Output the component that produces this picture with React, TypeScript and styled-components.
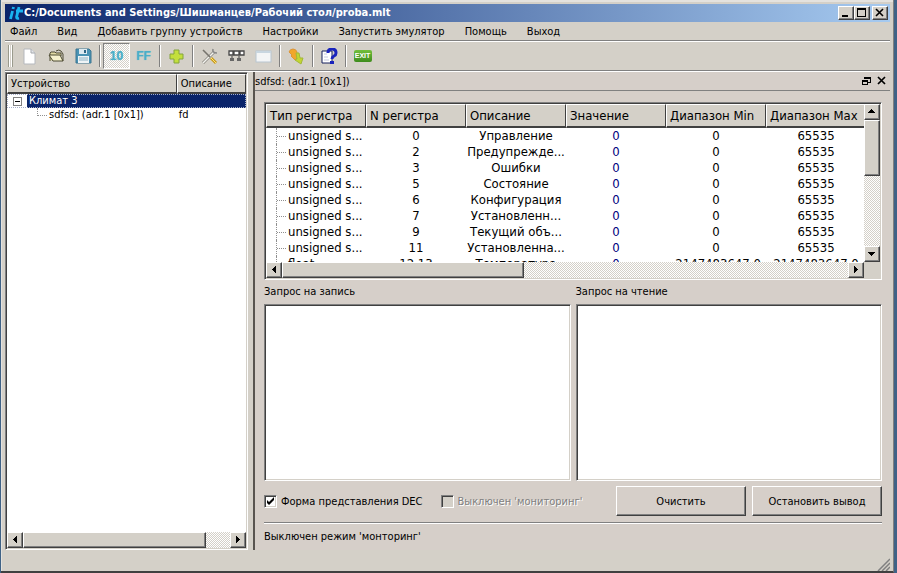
import React from "react";
import styled, { createGlobalStyle, css } from "styled-components";

const FACE = "#d4d0c8";
const PANEL = "#d6cfc9";
const DARK = "#404040";
const SHADOW = "#808080";

const Global = createGlobalStyle`
  *, *::before, *::after { box-sizing: border-box; }
  body { margin: 0; background: #3f6286; }
  body, button, input, textarea, table { font-family: "DejaVu Sans Condensed", "DejaVu Sans", sans-serif; font-size: 11px; color: #000; }
  button, textarea { border-radius: 0; }
`;

const raised = css`
  border: 1px solid;
  border-color: #fff ${DARK} ${DARK} #fff;
  box-shadow: inset -1px -1px 0 ${SHADOW};
`;
const sunken = css`
  border: 1px solid;
  border-color: ${SHADOW} #fff #fff ${SHADOW};
  box-shadow: inset 1px 1px 0 ${DARK}, inset -1px -1px 0 ${FACE};
`;
const dither = css`
  background: repeating-conic-gradient(#fff 0 25%, ${FACE} 0 50%) 0 0 / 2px 2px;
`;

const Window = styled.div`
  height: 100vh;
  margin: 0 3px 0 1px;
  padding: 4px 3px 0 4px;
  display: flex;
  flex-direction: column;
  background: ${FACE};
  border-bottom: 2px solid ${DARK};
  border-right: 1px solid ${SHADOW};
  box-shadow: inset 1px 2px 0 #e4e2de;
`;
const TitleBar = styled.header`
  height: 18px;
  flex: none;
  display: flex;
  align-items: center;
  padding: 0 2px 0 3px;
  background: linear-gradient(90deg, #0a246a, #a6caf0);
  color: #fff;
`;
const Title = styled.h1`
  margin: 0 auto 0 0;
  font-size: 11px;
  line-height: 18px;
  font-weight: bold;
  white-space: nowrap;
`;
const Caption = styled.button<{ $gap?: boolean }>`
  ${raised}
  width: 16px;
  height: 14px;
  padding: 0;
  display: flex;
  background: ${FACE};
  margin-left: ${(p) => (p.$gap ? 2 : 0)}px;
`;
const MenuBar = styled.nav`
  height: 19px;
  flex: none;
  display: flex;
  gap: 20px;
  padding-left: 5px;
  border-bottom: 1px solid ${SHADOW};
  a { color: #000; text-decoration: none; line-height: 20px; white-space: nowrap; }
`;
const ToolBar = styled.div`
  height: 30px;
  flex: none;
  display: flex;
  align-items: center;
  border-top: 1px solid #fff;
  border-bottom: 1px solid ${SHADOW};
  padding-left: 3px;
`;
const Grip = styled.span`
  width: 5px;
  height: 22px;
  margin-right: 3px;
  border: solid #9a9a8c;
  border-width: 0 1px;
  box-shadow: inset 1px 0 0 #fff, inset -1px 0 0 #fff;
`;
const Tool = styled.button<{ $on?: boolean }>`
  width: 27px;
  height: 26px;
  padding: 0;
  display: flex;
  align-items: center;
  justify-content: center;
  border: 1px solid transparent;
  background: none;
  ${(p) => p.$on && css`${dither} border-color: ${SHADOW} #fff #fff ${SHADOW};`}
`;
const Divider = styled.span`
  width: 2px;
  height: 22px;
  margin: 0 2px;
  background: linear-gradient(90deg, ${SHADOW} 50%, #fff 50%);
`;
const Main = styled.main`
  flex: 1;
  min-height: 0;
  display: flex;
  border-top: 1px solid #fff;
`;
const DevicePane = styled.section`
  ${sunken}
  width: 243px;
  flex: none;
  padding: 1px;
  background: #fff;
  display: flex;
  flex-direction: column;
`;
const Tree = styled.table`
  width: 100%;
  border-collapse: separate;
  border-spacing: 0;
  table-layout: fixed;
  th {
    height: 20px; padding: 0 3px; text-align: left; font-weight: normal; background: ${FACE};
    border: solid; border-width: 1px 1px 2px 1px; border-color: #fff ${DARK} ${DARK} #fff;
  }
  th:first-child { width: 71%; }
  td { height: 14px; line-height: 14px; padding: 0 2px; white-space: nowrap; }
`;
const Selected = styled.tr`
  background: #0a246a;
  color: #fff;
  outline: 1px dotted #a7b0cb;
  outline-offset: -1px;
`;
const Branch = styled.div<{ $leaf?: boolean }>`
  display: flex;
  align-items: center;
  height: 14px;
  padding-left: ${(p) => (p.$leaf ? 28 : 0)}px;
  &::before {
    content: "";
    display: ${(p) => (p.$leaf ? "block" : "none")};
    width: 10px;
    height: 8px;
    align-self: flex-start;
    margin-right: 2px;
    border: dotted #909090;
    border-width: 0 0 1px 1px;
  }
`;
const Expander = styled.button`
  width: 20px;
  height: 14px;
  margin-left: -2px;
  margin-right: 2px;
  padding: 0 0 0 6px;
  border: 0;
  background: #fff;
  display: flex;
  align-items: center;
`;
const Spacer = styled.div`
  flex: 1;
`;
const HScroll = styled.div`
  height: 16px;
  flex: none;
  display: flex;
  ${dither}
`;
const VScroll = styled.div`
  width: 16px;
  flex: none;
  display: flex;
  flex-direction: column;
  ${dither}
`;
const Arrow = styled.button`
  ${raised}
  width: 16px;
  height: 16px;
  flex: none;
  padding: 0;
  display: flex;
  background: ${FACE};
`;
const Thumb = styled.div<{ $grow: number }>`
  ${raised}
  background: ${FACE};
  flex: ${(p) => p.$grow} 0 0;
`;
const Track = styled.div<{ $grow: number }>`
  flex: ${(p) => p.$grow} 0 0;
`;
const Dock = styled.section`
  flex: 1;
  min-width: 0;
  margin-left: 5px;
  border-left: 2px solid #58544f;
  background: ${PANEL};
  display: flex;
  flex-direction: column;
`;
const DockTitle = styled.div`
  height: 19px;
  flex: none;
  display: flex;
  align-items: center;
  border-bottom: 1px solid ${SHADOW};
  h2 { margin: 0 auto 0 0; font-size: 11px; font-weight: normal; }
  button { width: 15px; height: 14px; padding: 0; border: 0; background: none; display: flex; }
`;
const Body = styled.div`
  flex: 1;
  min-height: 0;
  display: flex;
  flex-direction: column;
  padding: 11px 8px 0 9px;
`;
const TableFrame = styled.div`
  ${sunken}
  height: 178px;
  flex: none;
  padding: 1px;
  display: flex;
  flex-direction: column;
  background: ${FACE};
`;
const TableTop = styled.div`
  flex: 1;
  min-height: 0;
  display: flex;
`;
const Viewport = styled.div`
  flex: 1;
  min-width: 0;
  overflow: hidden;
  background: #fff;
`;
const Registers = styled.table`
  width: 600px;
  table-layout: fixed;
  border-collapse: separate;
  border-spacing: 0;
  font-size: 13px;
  th {
    height: 24px; padding: 0 3px; text-align: left; font-weight: normal; background: ${FACE};
    border: solid; border-width: 1px 1px 2px 1px; border-color: #fff ${DARK} ${DARK} #fff;
    white-space: nowrap;
  }
  td {
    height: 16px; line-height: 16px; padding: 0; text-align: center;
    white-space: nowrap;
  }
  td:first-child { padding-left: 10px; }
`;
const Value = styled.span`
  color: #000080;
`;
const TypeCell = styled.div`
  display: flex;
  height: 16px;
  border-left: 1px dotted #909090;
  &::before {
    content: "";
    width: 9px;
    height: 9px;
    margin-right: 2px;
    border-bottom: 1px dotted #909090;
  }
`;
const Corner = styled.div`
  width: 16px;
  background: ${FACE};
`;
const Logs = styled.div`
  flex: 1;
  min-height: 0;
  display: grid;
  grid-template-columns: 1fr 1fr;
  gap: 5px;
`;
const Log = styled.div`
  display: flex;
  flex-direction: column;
  label { height: 24px; flex: none; line-height: 24px; }
  textarea { ${sunken} flex: 1; width: 100%; resize: none; outline: 0; background: #fff; }
`;
const Actions = styled.div`
  display: flex;
  align-items: center;
  margin-top: 5px;
  height: 30px;
  flex: none;
`;
const Check = styled.label<{ $off?: boolean }>`
  display: flex;
  align-items: center;
  gap: 4px;
  margin-right: 18px;
  white-space: nowrap;
  ${(p) => p.$off && css`color: ${SHADOW}; text-shadow: 1px 1px 0 #fff;`}
  input {
    ${sunken}
    appearance: none;
    width: 13px;
    height: 13px;
    margin: 0;
    background: ${(p) => (p.$off ? FACE : "#fff")};
  }
  input:checked {
    background: #fff url("data:image/svg+xml,%3Csvg xmlns='http://www.w3.org/2000/svg' viewBox='0 0 11 11'%3E%3Cpath d='M2 4v3l2 2 5-5V1L4 6z'/%3E%3C/svg%3E") center / 11px 11px no-repeat;
  }
`;
const Buttons = styled.div`
  display: flex;
  gap: 6px;
  margin-left: auto;
`;
const Push = styled.button`
  ${raised}
  width: 130px;
  height: 30px;
  padding: 0;
  background: ${PANEL};
`;
const Message = styled.p`
  margin: 6px 0 0;
  height: 28px;
  flex: none;
  line-height: 27px;
  border-top: 1px solid ${SHADOW};
  box-shadow: inset 0 1px 0 #fff;
`;
const StatusBar = styled.footer`
  height: 21px;
  flex: none;
  display: flex;
  align-items: flex-end;
  justify-content: flex-end;
`;

const arrows = {
  left: "M9 3v7L5 6.5z",
  right: "M5 3v7l4-3.5z",
  up: "M3 8h7L6.5 4z",
  down: "M3 5h7L6.5 9z",
};
const ScrollButton = ({ dir }: { dir: keyof typeof arrows }) => (
  <Arrow aria-label={`Scroll ${dir}`}>
    <svg width="14" height="14" shapeRendering="crispEdges"><path d={arrows[dir]} /></svg>
  </Arrow>
);

const Logo = () => (
  <svg width="16" height="16" viewBox="0 0 16 16" fill="none" stroke="#19b5f1" strokeWidth="2.8">
    <path d="M4.5 6 2.5 14M5.5 2 5 4M11 2 8.7 11.5Q8 14 11 13.2M8 6H15" />
  </svg>
);

const icons: Record<string, React.ReactNode> = {
  new: <><path d="M3 1h7l4 4v11H3z" fill="#fff" stroke="#b5b8bd" /><path d="M10 1v4h4" fill="#e4e6ea" stroke="#a5a8ad" /></>,
  open: <><path d="M2 13V5l1-1h4l1 1h5v3" fill="#e2dba5" stroke="#4c4a32" /><path d="m1 7 4 6h10l-3-6z" fill="#f6f2cd" stroke="#4c4a32" /><path d="M8 3q3-2 5 0l2 3v7" fill="none" stroke="#4c4a32" /></>,
  save: <><path d="M1 1h13l2 2v12H1z" fill="#4a93b4" stroke="#3d7692" /><path d="M4 1h8v5H4z" fill="#dceaf1" /><path d="M9 2h2v3H9z" fill="#2d6585" /><path d="M3 8h11v7H3z" fill="#eef4f6" /><path d="M4 10h9M4 12h9" stroke="#8db2c4" /></>,
  add: <path d="M6 2h5v4h4v5h-4v4H6v-4H2V6h4z" fill="#c3df3c" stroke="#84a43c" strokeLinejoin="round" />,
  tools: <><path d="M2 15 13 4" stroke="#8b8880" strokeWidth="3" /><path d="M2 15 13 4" stroke="#f4f4ef" strokeWidth="1.4" /><path d="m2 2 7 7" stroke="#77746d" strokeWidth="1.6" /><path d="m10 10 5 5" stroke="#c89b19" strokeWidth="3" /><path d="m10 10 5 5" stroke="#ffe17a" /><path d="M12 1q-1 4 4 4" stroke="#888" strokeWidth="1.6" /></>,
  net: <><path d="M1 3h4v4H1zM6 3h5v4H6zM12 3h4v4h-4z" fill="#fff" stroke="#464646" strokeWidth="1.3" /><path d="M4 8v2M11 8v2" stroke="#444" /><path d="M2 10h4v3H2zM9 10h4v3H9z" fill="#666" /></>,
  panel: <><rect x="1" y="3" width="15" height="11" fill="#f3f5f6" stroke="#b8c5d0" /><path d="M1 4h15" stroke="#c8d6e0" strokeWidth="2" /></>,
  swap: <><path d="M1 4q1-3 4-3t4 3v3l2 1-4 4-4-4 1-1z" fill="#f1a72b" stroke="#dc963a" /><path d="M8 5h3l1 5h3l-2 6-6-4 2-1z" fill="#c3d532" stroke="#a3b838" /></>,
  help: <><path d="M1 3h10v12H1z" fill="#fff" stroke="#17205c" /><path d="M3 6h3M3 9h4M3 12h5" stroke="#c4c8dd" /><path d="M7 5q0-4 4-4t4 4q0 2-2 3-2 1-2 3" fill="none" stroke="#1a24bc" strokeWidth="3" /><path d="M9 13h4v3H9z" fill="#1a24bc" /></>,
};
const Icon = ({ name }: { name: string }) => (
  <svg width="17" height="17" viewBox="0 0 17 17" fill="none">{icons[name]}</svg>
);
const Word = styled.span`
  font: bold 12px "Liberation Sans", sans-serif;
  color: #4aaec8;
  text-shadow: 0 0 1px #6bbdd0;
`;
const Exit = styled.span`
  width: 18px;
  height: 12px;
  border-radius: 2px;
  background: linear-gradient(#72bf3c, #3e8c1d);
  color: #fff;
  font: bold 7px/12px "Liberation Sans", sans-serif;
`;

const menu = ["Файл", "Вид", "Добавить группу устройств", "Настройки", "Запустить эмулятор", "Помощь", "Выход"];
const columns = ["Тип регистра", "N регистра", "Описание", "Значение", "Диапазон Min", "Диапазон Max"];
const U = "unsigned s...";
const rows = [
  [U, "0", "Управление", "0", "0", "65535"],
  [U, "2", "Предупрежде...", "0", "0", "65535"],
  [U, "3", "Ошибки", "0", "0", "65535"],
  [U, "5", "Состояние", "0", "0", "65535"],
  [U, "6", "Конфигурация", "0", "0", "65535"],
  [U, "7", "Установленн...", "0", "0", "65535"],
  [U, "9", "Текущий объ...", "0", "0", "65535"],
  [U, "11", "Установленна...", "0", "0", "65535"],
  ["float", "12,13", "Температура", "0", "-2147483647.0", "2147483647.0"],
];

export default function App() {
  return (
    <>
      <Global />
      <Window>
        <TitleBar>
          <Logo />
          <Title>C:/Documents and Settings/Шишманцев/Рабочий стол/proba.mlt</Title>
          <Caption aria-label="Minimize"><svg width="14" height="12"><path d="M3 8h6v2H3z" /></svg></Caption>
          <Caption aria-label="Maximize"><svg width="14" height="12" shapeRendering="crispEdges"><path d="M2 1h9v9H2zM3 3v6h7V3z" fillRule="evenodd" /></svg></Caption>
          <Caption aria-label="Close" $gap><svg width="14" height="12"><path d="m3 2 7 7m0-7L3 9" stroke="#000" strokeWidth="1.6" /></svg></Caption>
        </TitleBar>
        <MenuBar>{menu.map((m) => <a href="#" key={m}>{m}</a>)}</MenuBar>
        <ToolBar>
          <Grip />
          <Tool aria-label="New"><Icon name="new" /></Tool>
          <Tool aria-label="Open"><Icon name="open" /></Tool>
          <Tool aria-label="Save"><Icon name="save" /></Tool>
          <Divider />
          <Tool $on><Word>10</Word></Tool>
          <Tool><Word>FF</Word></Tool>
          <Divider />
          <Tool aria-label="Add"><Icon name="add" /></Tool>
          <Divider />
          <Tool aria-label="Settings"><Icon name="tools" /></Tool>
          <Tool aria-label="Network"><Icon name="net" /></Tool>
          <Tool aria-label="Panel"><Icon name="panel" /></Tool>
          <Divider />
          <Tool aria-label="Exchange"><Icon name="swap" /></Tool>
          <Divider />
          <Tool aria-label="Help"><Icon name="help" /></Tool>
          <Divider />
          <Tool><Exit>EXIT</Exit></Tool>
        </ToolBar>
        <Main>
          <DevicePane>
            <Tree>
              <thead><tr><th>Устройство</th><th>Описание</th></tr></thead>
              <tbody>
                <Selected>
                  <td>
                    <Branch>
                      <Expander aria-label="Collapse">
                        <svg width="9" height="9" shapeRendering="crispEdges"><path d="M.5.5h8v8h-8z" fill="#fff" stroke="#808080" /><path d="M2 4.5h5" stroke="#000" /></svg>
                      </Expander>
                      Климат 3
                    </Branch>
                  </td>
                  <td />
                </Selected>
                <tr><td><Branch $leaf>sdfsd: (adr.1 [0x1])</Branch></td><td>fd</td></tr>
              </tbody>
            </Tree>
            <Spacer />
            <HScroll>
              <ScrollButton dir="left" />
              <Thumb $grow={183} />
              <Track $grow={24} />
              <ScrollButton dir="right" />
            </HScroll>
          </DevicePane>
          <Dock>
            <DockTitle>
              <h2>sdfsd: (adr.1 [0x1])</h2>
              <button aria-label="Float"><svg width="14" height="14" fill="none" stroke="#000" shapeRendering="crispEdges"><path d="M4.5 5V3.5h6v5H8M4 3h7M4 4h7M2.5 6.5h5v4h-5zM2 7h6" /></svg></button>
              <button aria-label="Close panel"><svg width="14" height="14"><path d="m3 3 7 7m0-7-7 7" stroke="#000" strokeWidth="1.7" /></svg></button>
            </DockTitle>
            <Body>
              <TableFrame>
                <TableTop>
                  <Viewport>
                    <Registers>
                      <thead><tr>{columns.map((c) => <th key={c}>{c}</th>)}</tr></thead>
                      <tbody>
                        {rows.map((r) => (
                          <tr key={r[1]}>
                            {r.map((v, i) => (
                              <td key={i}>{i === 0 ? <TypeCell>{v}</TypeCell> : i === 3 ? <Value>{v}</Value> : v}</td>
                            ))}
                          </tr>
                        ))}
                      </tbody>
                    </Registers>
                  </Viewport>
                  <VScroll>
                    <ScrollButton dir="up" />
                    <Thumb $grow={55} />
                    <Track $grow={72} />
                    <ScrollButton dir="down" />
                  </VScroll>
                </TableTop>
                <HScroll>
                  <ScrollButton dir="left" />
                  <Thumb $grow={241} />
                  <Track $grow={325} />
                  <ScrollButton dir="right" />
                  <Corner />
                </HScroll>
              </TableFrame>
              <Logs>
                <Log><label htmlFor="write">Запрос на запись</label><textarea id="write" /></Log>
                <Log><label htmlFor="read">Запрос на чтение</label><textarea id="read" /></Log>
              </Logs>
              <Actions>
                <Check><input type="checkbox" defaultChecked />Форма представления DEC</Check>
                <Check $off><input type="checkbox" disabled />Выключен 'мониторинг'</Check>
                <Buttons><Push>Очистить</Push><Push>Остановить вывод</Push></Buttons>
              </Actions>
              <Message>Выключен режим 'монторинг'</Message>
            </Body>
          </Dock>
        </Main>
        <StatusBar>
          <svg width="13" height="13" stroke="#808080" strokeWidth="1.5"><path d="M1 13 13 1M5 13l8-8M9 13l4-4" /></svg>
        </StatusBar>
      </Window>
    </>
  );
}
